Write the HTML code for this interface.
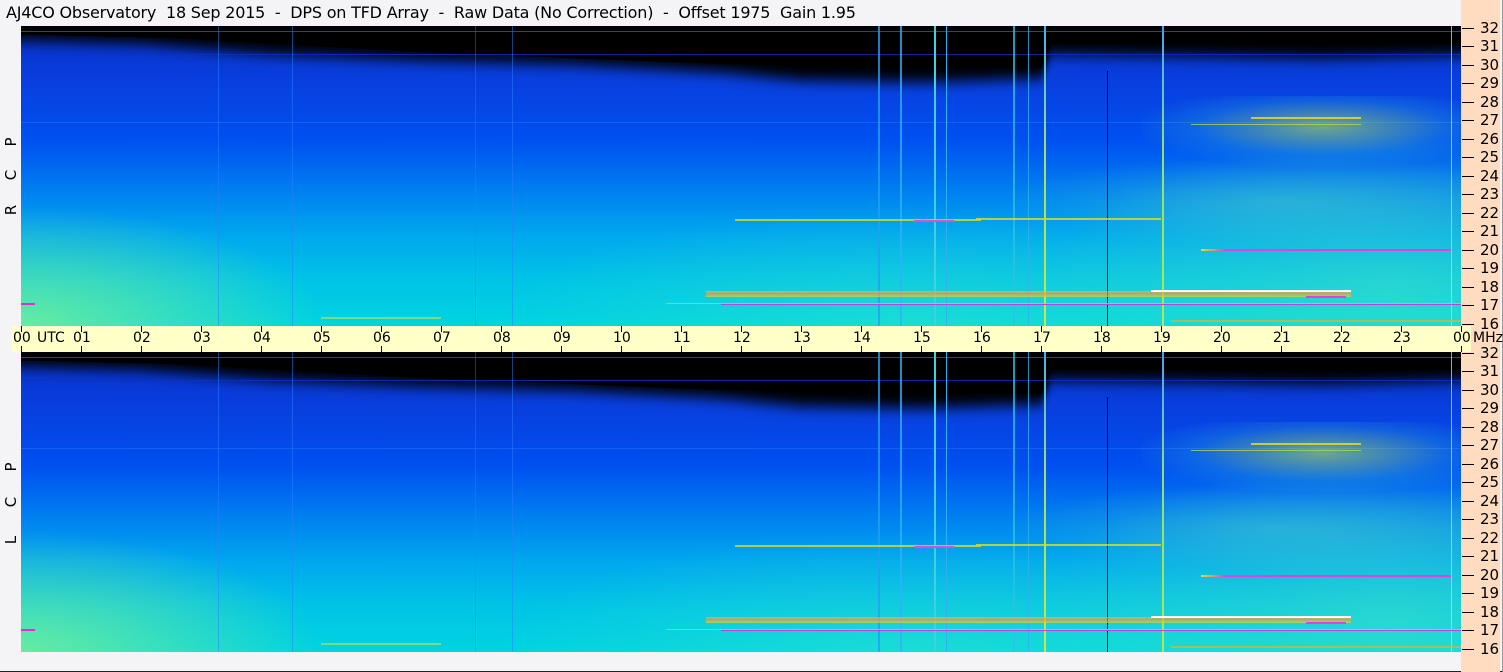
<!DOCTYPE html>
<html><head><meta charset="utf-8"><style>
*{margin:0;padding:0;box-sizing:border-box}
body{width:1503px;height:672px;background:#f4f4f6;position:relative;overflow:hidden;font-family:"DejaVu Sans","Liberation Sans",sans-serif;color:#000;border-right:1px solid #999;border-bottom:1px solid #222}
.title{position:absolute;left:6px;top:3px;font-size:16px;white-space:pre;letter-spacing:-0.2px}
.peach{position:absolute;left:1461px;top:0;width:39px;height:672px;background:#ffdcc0}
.axis{position:absolute;left:12px;top:326px;width:1459px;height:26px;background:#ffffc8}
.panel{position:absolute;left:21px;width:1440px;height:300px;overflow:hidden;
background:
radial-gradient(ellipse 300px 120px at 0% 100%,rgba(120,240,150,.85),rgba(120,240,150,0)),
radial-gradient(ellipse 420px 120px at 62% 100%,rgba(60,230,200,.45),rgba(60,230,200,0)),
radial-gradient(ellipse 360px 160px at 95% 90%,rgba(80,230,190,.5),rgba(80,230,190,0)),
linear-gradient(to bottom,#0830c8 0%,#0840e0 20%,#0050f0 38%,#0080f0 55%,#00a8ee 70%,#00c4e6 85%,#00d4e0 100%)}
.l{position:absolute}
.lbl{position:absolute;left:4px;font-size:15px;transform:rotate(-90deg);transform-origin:center;width:14px;text-align:center}
.fr{position:absolute;left:1462px;font-size:15px;line-height:14px}
.fr span{display:inline-block;width:12px;height:1px;background:#000;vertical-align:middle;margin-right:6px}
.t{position:absolute;top:330px;font-size:14px;line-height:16px}
.tk{position:absolute;width:1px;background:#000}
</style></head><body>
<div class="title">AJ4CO Observatory  18 Sep 2015  -  DPS on TFD Array  -  Raw Data (No Correction)  -  Offset 1975  Gain 1.95</div>
<div class="peach"></div>
<div class="axis"></div>

<div class="panel" id="p1" style="top:26px">
 <svg class="l" style="left:0;top:0" width="1440" height="110"><defs><filter id="b" x="-5%" y="-50%" width="110%" height="200%"><feGaussianBlur stdDeviation="3 7"/></filter></defs>
 <path d="M-20,-20 L1460,-20 L1460,28 L1300,32 L1180,30 L1030,28 L1020,52 L900,56 L780,54 L700,46 L550,38 L400,34 L250,28 L120,18 L-20,14 Z" fill="#000" filter="url(#b)"/>
 <path d="M-20,-20 L1460,-20 L1460,18 L1030,18 L1020,42 L700,38 L400,26 L150,12 L-20,8 Z" fill="#000"/></svg>
 <div class="l" style="left:0;top:5px;width:1440px;height:1px;background:#1040e0"></div>
 <div class="l" style="left:0;top:28px;width:1440px;height:1px;background:#1030c0;opacity:.8"></div>
 <div class="l" style="left:0;top:96px;width:1440px;height:1px;background:#2070ff;opacity:.6"></div>
 <div class="l" style="left:1120px;top:70px;width:330px;height:70px;background:radial-gradient(ellipse at 55% 45%,rgba(200,240,60,.55),rgba(60,200,200,.2) 50%,rgba(0,0,0,0) 75%)"></div>
 <div class="l" style="left:1230px;top:91px;width:110px;height:2px;background:#e8e020;opacity:.8"></div>
 <div class="l" style="left:1170px;top:98px;width:170px;height:1px;background:#c0e040;opacity:.7"></div>
 <div class="l" style="left:980px;top:130px;width:460px;height:90px;background:radial-gradient(ellipse at 60% 50%,rgba(90,220,190,.35),rgba(0,0,0,0) 70%)"></div>
 <div class="l" style="left:197px;top:0;width:1px;height:300px;background:#2a80ff;opacity:.5"></div>
 <div class="l" style="left:271px;top:0;width:1px;height:300px;background:#2a80ff;opacity:.5"></div>
 <div class="l" style="left:454px;top:0;width:1px;height:300px;background:#2a80ff;opacity:.4"></div>
 <div class="l" style="left:491px;top:0;width:1px;height:300px;background:#2a80ff;opacity:.5"></div>
 <div class="l" style="left:857px;top:0;width:2px;height:300px;background:#20a0f0;opacity:.8"></div>
 <div class="l" style="left:879px;top:0;width:2px;height:300px;background:#30b0ff;opacity:.8"></div>
 <div class="l" style="left:913px;top:0;width:2px;height:300px;background:#40d0e0"></div>
 <div class="l" style="left:925px;top:0;width:1px;height:300px;background:#30b0f0"></div>
 <div class="l" style="left:992px;top:0;width:2px;height:300px;background:#30c0e0;opacity:.8"></div>
 <div class="l" style="left:1007px;top:0;width:1px;height:300px;background:#30b0f0;opacity:.8"></div>
 <div class="l" style="left:1023px;top:0;width:2px;height:300px;background:linear-gradient(#40b0ff,#a0e060 40%,#c8e840)"></div>
 <div class="l" style="left:1086px;top:45px;width:1px;height:255px;background:#000"></div>
 <div class="l" style="left:1141px;top:0;width:2px;height:300px;background:linear-gradient(#40a0ff,#90e070 40%,#b0e850)"></div>
 <div class="l" style="left:1430px;top:0;width:1px;height:300px;background:#e0e040;opacity:.8"></div>
 <div class="l" style="left:714px;top:193px;width:246px;height:2px;background:#d0e020;opacity:.8"></div>
 <div class="l" style="left:893px;top:194px;width:40px;height:2px;background:#e050c0"></div>
 <div class="l" style="left:955px;top:192px;width:185px;height:2px;background:#e0e010;opacity:.8"></div>
 <div class="l" style="left:1180px;top:223px;width:250px;height:2px;background:linear-gradient(to right,#e0e020,#e040e0 10%,#e040e0)"></div>
 <div class="l" style="left:685px;top:265px;width:645px;height:6px;background:linear-gradient(#f0c020,#f09050 40%,#d0e030);opacity:.7"></div>
 <div class="l" style="left:1130px;top:264px;width:200px;height:2px;background:#fff"></div>
 <div class="l" style="left:1285px;top:270px;width:40px;height:2px;background:#e040e0"></div>
 <div class="l" style="left:645px;top:277px;width:795px;height:1px;background:#f0c020;opacity:.8"></div>
 <div class="l" style="left:700px;top:278px;width:740px;height:1px;background:#c040e0"></div>
 <div class="l" style="left:0;top:277px;width:14px;height:2px;background:#e030d0"></div>
 <div class="l" style="left:1150px;top:294px;width:290px;height:2px;background:#e0b030;opacity:.7"></div>
 <div class="l" style="left:300px;top:291px;width:120px;height:2px;background:#d0e040;opacity:.6"></div>
</div>

<div class="panel" id="p2" style="top:352px"></div>

<div class="lbl" style="top:133px">P</div>
<div class="lbl" style="top:166px">C</div>
<div class="lbl" style="top:201px">R</div>
<div class="lbl" style="top:458px">P</div>
<div class="lbl" style="top:493px">C</div>
<div class="lbl" style="top:531px">L</div>

<div id="tm"></div>
<div class="t" style="left:13px">00</div>
<div class="t" style="left:37px">UTC</div>
<div class="t" style="left:73px">01</div><div class="t" style="left:133px">02</div><div class="t" style="left:193px">03</div><div class="t" style="left:253px">04</div><div class="t" style="left:313px">05</div><div class="t" style="left:373px">06</div><div class="t" style="left:433px">07</div><div class="t" style="left:493px">08</div><div class="t" style="left:553px">09</div><div class="t" style="left:613px">10</div><div class="t" style="left:673px">11</div><div class="t" style="left:733px">12</div><div class="t" style="left:793px">13</div><div class="t" style="left:853px">14</div><div class="t" style="left:913px">15</div><div class="t" style="left:973px">16</div><div class="t" style="left:1033px">17</div><div class="t" style="left:1093px">18</div><div class="t" style="left:1153px">19</div><div class="t" style="left:1213px">20</div><div class="t" style="left:1273px">21</div><div class="t" style="left:1333px">22</div><div class="t" style="left:1393px">23</div><div class="t" style="left:1453px">00</div><div class="t" style="left:1473px">MHz</div>

<div class="fr" style="top:21px"><span></span>32</div><div class="fr" style="top:39px"><span></span>31</div><div class="fr" style="top:58px"><span></span>30</div><div class="fr" style="top:76px"><span></span>29</div><div class="fr" style="top:95px"><span></span>28</div><div class="fr" style="top:113px"><span></span>27</div><div class="fr" style="top:132px"><span></span>26</div><div class="fr" style="top:150px"><span></span>25</div><div class="fr" style="top:169px"><span></span>24</div><div class="fr" style="top:187px"><span></span>23</div><div class="fr" style="top:206px"><span></span>22</div><div class="fr" style="top:224px"><span></span>21</div><div class="fr" style="top:243px"><span></span>20</div><div class="fr" style="top:261px"><span></span>19</div><div class="fr" style="top:280px"><span></span>18</div><div class="fr" style="top:298px"><span></span>17</div><div class="fr" style="top:317px"><span></span>16</div>
<div class="fr" style="top:346px"><span></span>32</div><div class="fr" style="top:364px"><span></span>31</div><div class="fr" style="top:383px"><span></span>30</div><div class="fr" style="top:401px"><span></span>29</div><div class="fr" style="top:420px"><span></span>28</div><div class="fr" style="top:438px"><span></span>27</div><div class="fr" style="top:457px"><span></span>26</div><div class="fr" style="top:475px"><span></span>25</div><div class="fr" style="top:494px"><span></span>24</div><div class="fr" style="top:512px"><span></span>23</div><div class="fr" style="top:531px"><span></span>22</div><div class="fr" style="top:549px"><span></span>21</div><div class="fr" style="top:568px"><span></span>20</div><div class="fr" style="top:586px"><span></span>19</div><div class="fr" style="top:605px"><span></span>18</div><div class="fr" style="top:623px"><span></span>17</div><div class="fr" style="top:642px"><span></span>16</div>

<script>
document.getElementById('p2').innerHTML=document.getElementById('p1').innerHTML.replace(/id="b"/,'id="b2"').replace(/url\(#b\)/,'url(#b2)');
var h='';for(var i=0;i<=24;i++){var x=21+i*60;h+='<div class="tk" style="left:'+x+'px;top:326px;height:6px"></div><div class="tk" style="left:'+x+'px;top:346px;height:6px"></div>';}
document.getElementById('tm').innerHTML=h;
</script>
</body></html>
